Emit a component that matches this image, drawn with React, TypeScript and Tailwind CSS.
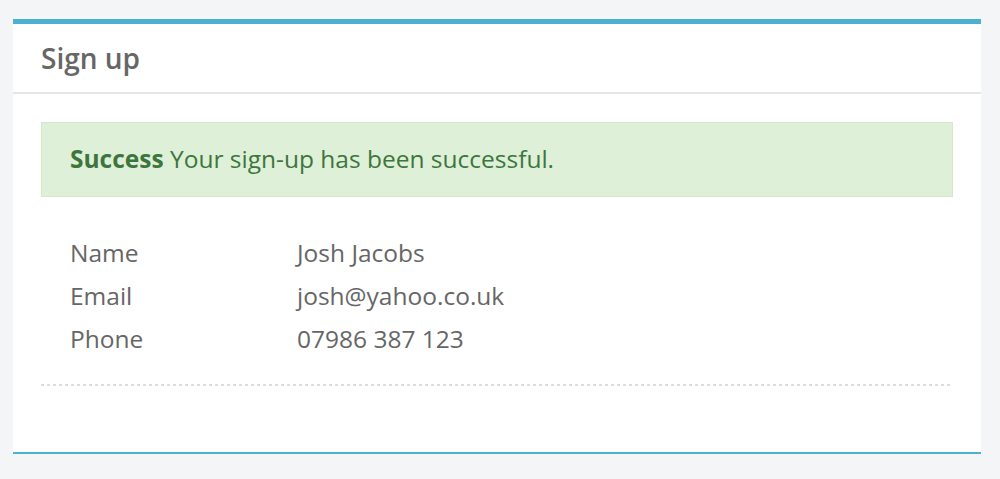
export default function App() {
  const rows = [
    ["Name", "Josh Jacobs"],
    ["Email", "josh@yahoo.co.uk"],
    ["Phone", "07986 387 123"],
  ];

  return (
    <div className="min-h-[479px] bg-[#f4f5f7] pt-[19px] font-['Open_Sans',sans-serif]">
      <div className="ml-[13px] w-[968px] bg-white border-t-[5px] border-b-2 border-[#4bb1cf]">
        {/* Header */}
        <div className="h-[70px] flex items-center px-[28px] border-b-2 border-[#e6e6e6]">
          <h1 className="text-[28px] font-semibold text-[#666666] leading-none">Sign up</h1>
        </div>

        {/* Body */}
        <div className="px-[28px] pt-[28px] pb-[66px]">
          <div className="h-[75px] flex items-center px-[28px] bg-[#dff0d8] border border-[#d6e9c6] text-[#3c763d] text-[24.5px]">
            <p>
              <strong className="font-bold">Success</strong> Your sign-up has been successful.
            </p>
          </div>

          <dl className="mt-[34px] px-[29px] text-[24.5px] text-[#666666]">
            {rows.map(([k, v]) => (
              <div key={k} className="flex leading-[43px]">
                <dt className="w-[227px]">{k}</dt>
                <dd>{v}</dd>
              </div>
            ))}
          </dl>

          <div className="mt-[24px] h-[2px] bg-[repeating-linear-gradient(90deg,#dddddd_0_3px,transparent_3px_6px)]" />
        </div>
      </div>
    </div>
  );
}
